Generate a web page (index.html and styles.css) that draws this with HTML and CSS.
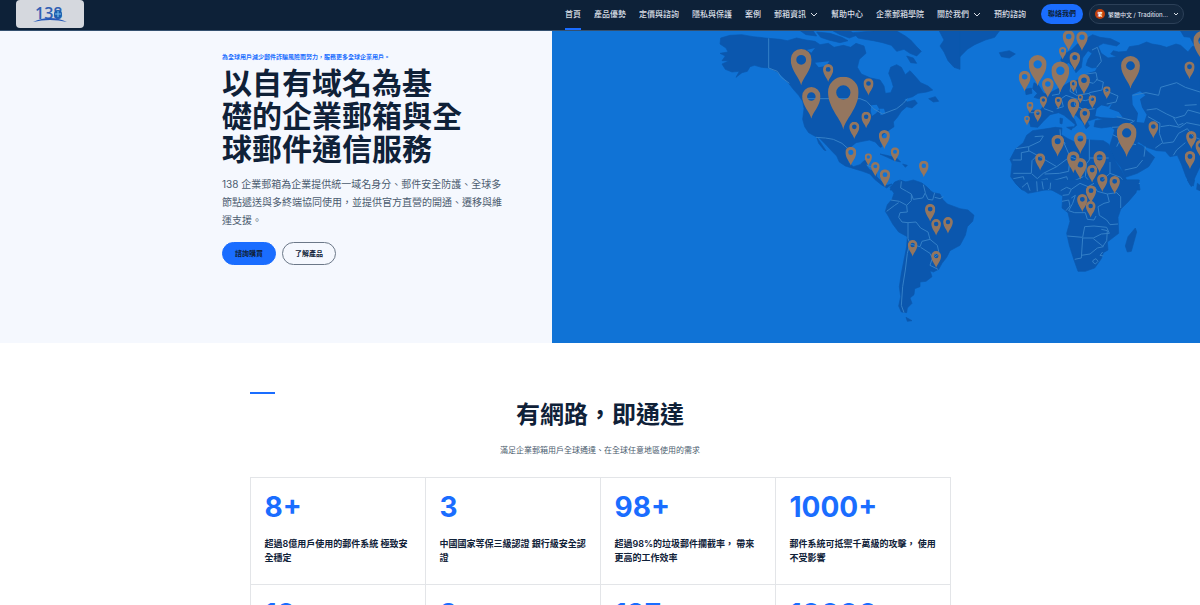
FILE: index.html
```html
<!DOCTYPE html>
<html lang="zh-Hant">
<head>
    <meta charset="UTF-8">
    <meta name="viewport" content="width=device-width, initial-scale=1.0">
    <title>138 企業郵箱</title>
    <link rel="stylesheet" href="styles.css">
</head>
<body>
    <header class="site-header">
        <a href="#" class="logo" aria-label="138">
            <svg viewBox="0 0 36 28" width="36" height="28">
                <text x="3" y="19" class="logo-text">138</text>
                <circle cx="26" cy="14" r="4" fill="#1b5fae"/>
                <path d="M23 14h6M26 11v6" stroke="#7cc0ee" stroke-width="1"/>
                <path d="M1 22Q18 14 35 22Q18 18 1 22Z" fill="#2458b8"/>
            </svg>
        </a>
        <nav class="main-nav">
            <a href="#" class="active">首頁</a>
            <a href="#">產品優勢</a>
            <a href="#">定價與諮詢</a>
            <a href="#">隱私與保護</a>
            <a href="#">案例</a>
            <button type="button">郵箱資訊 <svg class="chevron" viewBox="0 0 8 8"><path d="M1 3l3 3 3-3"/></svg></button>
            <a href="#">幫助中心</a>
            <a href="#">企業郵箱學院</a>
            <button type="button">關於我們 <svg class="chevron" viewBox="0 0 8 8"><path d="M1 3l3 3 3-3"/></svg></button>
            <a href="#">預約諮詢</a>
        </nav>
        <a href="#" class="contact">聯絡我們</a>
        <label class="lang">
            <span class="lang-badge">繁</span>
            <select aria-label="語言">
                <option>繁體中文 / Tradition...</option>
            </select>
            <svg class="chevron" viewBox="0 0 8 8"><path d="M2 3l2 2 2-2"/></svg>
        </label>
    </header>

    <main>
        <section class="hero">
            <div class="hero-text">
                <p class="eyebrow">為全球用戶減少郵件詐騙風險而努力，服務更多全球企業用戶。</p>
                <h1>以自有域名為基<br>礎的企業郵箱與全<br>球郵件通信服務</h1>
                <p class="intro">138 企業郵箱為企業提供統一域名身分、郵件安全防護、全球多節點遞送與多終端協同使用，並提供官方直營的開通、遷移與維運支援。</p>
                <div class="hero-buttons">
                    <a href="#" class="btn btn-primary">諮詢購買</a>
                    <a href="#" class="btn btn-outline">了解產品</a>
                </div>
            </div>
            <svg class="hero-map" viewBox="0 0 1944 936" preserveAspectRatio="xMidYMid slice" aria-hidden="true">
                <symbol id="pin" viewBox="0 0 60 104">
                    <path fill-rule="evenodd" d="M30 104C27 84 0 62 0 30A30 30 0 0 1 60 30C60 62 33 84 30 104ZM30 17A14 14 0 1 0 30 45A14 14 0 1 0 30 17Z"/>
                </symbol>

                <!-- North America -->
                <g transform="translate(444 -3)">
                    <path class="land" d="M62 24L90 16L125 14L160 20L205 25L240 28L262 32L290 24L318 30L345 34L360 44L385 40L402 52L430 46L452 52L468 40L492 48L498 70L478 88L472 112L484 132L512 144L540 150L552 168L556 190L572 188L580 170L574 150L566 130L572 112L590 104L604 112L616 134L630 122L648 142L662 158L684 168L698 180L680 186L654 190L638 200L612 208L622 216L644 210L652 220L636 234L620 230L604 244L592 262L580 276L582 290L568 300L548 314L540 330L546 350L540 352L526 336L508 330L488 334L468 338L456 348L446 356L438 374L446 398L460 410L480 404L492 392L506 392L500 408L510 420L528 424L530 440L546 456L560 466L576 462L560 474L544 464L524 448L510 432L488 424L462 416L436 408L418 396L410 378L396 364L378 344L358 324L344 318L326 308L314 290L308 268L312 236L308 214L296 196L280 178L266 160L248 140L232 126L210 114L184 112L164 106L150 110L142 124L126 128L108 142L118 124L96 126L76 118L66 102L88 92L66 92L76 78L60 70L84 66L78 54L60 42Z"/>
                    <path class="land" d="M350 322L362 338L378 362L372 360L356 340ZM302 3L340 3L350 18L318 14ZM350 6L390 10L426 22L444 32L420 38L386 30L362 22ZM400 3L452 4L470 16L448 24L420 14ZM460 8L520 3L590 3L616 18L632 30L650 50L664 64L650 78L630 70L612 58L590 64L574 46L548 38L520 32L494 28L474 24ZM620 78L640 84L650 100L632 98ZM686 206L706 200L716 214L700 216ZM718 3L780 3L780 118L762 112L744 92L732 66L720 48L732 30Z"/>
                    <path class="water" d="M345 98L388 94L378 108L356 112ZM320 60L345 54L334 68ZM514 226L530 224L538 238L528 250L516 258L512 242ZM538 236L552 236L556 250L542 256Z"/>
                    <path class="land" d="M540 372L560 376L590 384L602 396L584 392L562 382ZM608 402L622 406L616 412ZM570 480L584 456L600 450L616 456L640 450L664 458L680 470L690 480Z"/>
                    <path class="border" d="M206 25V114L232 124L244 142L268 160M308 206H480L500 214L520 236L548 252L590 236L610 220L622 206M348 322L376 324L400 328L426 340L444 356M500 405L520 414L526 430M600 452L606 470"/>
                </g>

                <!-- Europe, Asia and northern Africa -->
                <g transform="translate(1224 -3)">
                    <path class="land" d="M0 3H118L104 22L76 30L44 44L22 58L0 80ZM118 68L148 62L166 72L148 84L124 80Z"/>
                    <path class="land" d="M720 42L696 50L684 66L662 46L648 42L620 52L600 46L576 42L560 36L536 46L508 50L500 64L476 66L460 62L452 72L470 80L444 84L424 70L414 48L430 40L470 48L480 40L452 26L420 22L398 14L378 26L352 42L334 60L310 74L302 90L312 104L326 98L338 110L348 128L364 112L368 84L384 62L396 70L384 88L378 106L396 114L412 112L406 124L384 130L374 142L354 150L330 156L310 168L290 178L274 186L252 192L232 196L246 208L252 224L242 240L208 242L206 268L212 290L234 292L250 274L270 254L296 248L312 256L334 274L346 284L340 294L350 286L344 270L330 252L348 256L368 276L378 296L388 288L382 274L400 268L412 264L430 268L406 272L402 290L424 294L454 290L464 300L458 320L448 350L462 386L482 412L496 442L532 430L566 410L584 382L560 362L548 348L530 340L536 336L560 352L590 362L616 364L630 380L652 376L664 402L678 440L694 470L706 440L720 410Z"/>
                    <path class="land" d="M222 158L236 166L248 186L262 200L236 206L222 202L232 190L218 176ZM196 178L214 174L216 190L198 194ZM300 264L308 266L306 282L300 280ZM320 292L340 290L334 300Z"/>
                    <path class="land" d="M218 302L248 298L286 292L306 294L304 314L324 326L344 336L358 326L392 330L430 332L446 342L452 362L468 396L486 424L500 450L536 450L540 480H186L168 462L152 440L156 402L150 388L166 358L190 338L200 316Z"/>
                    <path class="water" d="M410 236L424 226L444 230L456 220L448 236L476 246L488 262L460 264L424 262L406 258ZM516 194L540 184L556 196L540 208L546 232L560 254L552 278L530 276L534 250L518 224ZM656 6L672 3L686 20L668 34Z"/>
                    <path class="land" d="M662 3H720V30L702 44L690 22L672 20Z"/>
                    <path class="border" d="M396 60L412 52L420 76L424 94L410 112M380 132L408 128L412 148L400 160L384 156M408 148L430 156L426 180L388 188M432 180L474 198L468 216L440 222M334 160L330 184L350 196L388 190L396 206L376 212L346 206L318 196L304 206L310 230L290 236M252 236L280 246M212 248L236 248M346 206L344 226L374 240L404 236M300 178L298 192L276 196M342 150L350 190M456 292L494 290L524 272M470 260L520 272M518 196L558 188L596 196L602 172L650 158L676 172L720 186M560 240L590 236L620 252L646 264L674 256L684 240L720 250M674 226L710 224M564 260L600 280L598 310L608 338L586 354M602 290L628 286L660 292L680 278L720 286M640 262L654 286L670 280M608 340L640 336L656 310L682 296L700 320L720 328M640 376L650 360L676 338M458 314L478 324L500 338L528 344M470 350L480 330M494 420L530 412L548 390M556 350L552 380M300 298L302 330L316 340M224 320L250 318L240 334L206 350L168 356M206 350V364L184 368V390H158M206 362L232 376L216 392L214 430L160 430M232 376L290 410L250 430L232 446L216 432M290 410L330 380L308 330M388 328V390M388 384L446 384M388 390L380 400L330 380M330 380L326 424L298 430L254 432M380 400L376 440L394 460L420 456L450 430L450 396M160 446L190 440L196 462L216 458L220 480M216 458L262 446L266 480M266 456L320 440L326 460L306 480M326 460L370 440M450 430L482 442L500 466L540 460"/>
                </g>

                <!-- South America -->
                <g transform="translate(444 447)">
                    <path class="land" d="M570 22L584 8L604 2L624 8L644 6L668 12L686 28L700 38L720 42L728 58L742 72L780 86L804 90L822 106L818 124L802 140L796 166L780 196L750 212L740 232L726 250L716 268L700 276L690 272L696 290L678 304L660 306L660 320L644 326L642 344L630 354L636 370L622 384L620 398L604 396L596 378L602 350L598 320L604 280L612 240L620 200L622 170L596 156L578 132L566 110L556 94L562 74L576 58L582 40ZM618 412L636 422L622 424Z"/>
                    <path class="border" d="M604 4L602 24L620 34L634 42L634 62L620 76L598 64L572 60M560 94L584 76L596 68M620 76L622 96L600 98L596 112L606 126L624 128V176L630 190L622 220L616 270L608 320L604 376L612 398M634 42L640 58L668 54L676 38L670 14M676 40L684 58L698 60L704 38M704 52L720 56L730 50M624 128L648 126L662 144L684 156L690 178L666 184L660 200L630 192M662 202L690 220L696 232L716 214L712 196L690 178M716 222L696 238L690 256L714 268"/>
                </g>

                <!-- Southern Africa -->
                <g transform="translate(1224 447)">
                    <path class="land" d="M160 0L178 22L204 40L236 34L268 26L290 38L308 48L306 84L324 98L330 124L320 160L328 196L342 240L354 274L376 274L404 264L424 236L430 218L444 210L442 186L476 160L474 112L482 88L504 66L528 38L538 0ZM526 144L530 156L514 214L502 216L496 198L504 170ZM682 0H704L700 18L690 14ZM712 10L720 16V32L710 28Z"/>
                    <path class="border" d="M186 22L202 8L210 32M232 34L230 4M250 28L246 4M270 28L272 8M302 32L320 22L334 28L326 44L308 46M334 28L360 10L384 20L402 10M306 64L326 60L330 78L318 92M334 54L346 46L338 70L326 92L344 98H376L382 118L402 120L408 108M404 20L412 34L442 42L470 38L482 50M442 42L448 66L432 70L414 80L418 106L440 120L450 134L474 132M482 50V84M322 168L368 172L374 140L402 138L440 142L448 160L424 162L400 174L368 174L364 234L344 238M400 176L430 200L412 204L390 222L364 226M424 148L442 152L440 182L428 200M428 216L420 226L430 228M400 240L408 236L414 244L406 252L398 246Z"/>
                </g>

                <g class="pins">
                    <g transform="translate(444 -3)">
                        <use href="#pin" x="272" y="57" width="63" height="109"/>
                        <use href="#pin" x="369" y="102" width="31" height="54"/>
                        <use href="#pin" x="384" y="140" width="92" height="159"/>
                        <use href="#pin" x="306" y="171" width="56" height="95"/>
                        <use href="#pin" x="490" y="145" width="31" height="52"/>
                        <use href="#pin" x="484" y="245" width="29" height="50"/>
                        <use href="#pin" x="447" y="275" width="32" height="52"/>
                        <use href="#pin" x="536" y="300" width="34" height="57"/>
                        <use href="#pin" x="436" y="350" width="33" height="57"/>
                        <use href="#pin" x="571" y="352" width="28" height="44"/>
                        <use href="#pin" x="494" y="370" width="22" height="37"/>
                        <use href="#pin" x="512" y="396" width="28" height="44"/>
                        <use href="#pin" x="539" y="418" width="32" height="54"/>
                        <use href="#pin" x="657" y="392" width="29" height="50"/>
                    </g>
                    <g transform="translate(1224 -3)">
                        <use href="#pin" x="307" y="1" width="38" height="62"/>
                        <use href="#pin" x="348" y="4" width="36" height="59"/>
                        <use href="#pin" x="297" y="51" width="22" height="38"/>
                        <use href="#pin" x="328" y="66" width="33" height="56"/>
                        <use href="#pin" x="206" y="75" width="54" height="94"/>
                        <use href="#pin" x="274" y="94" width="54" height="94"/>
                        <use href="#pin" x="176" y="122" width="36" height="62"/>
                        <use href="#pin" x="245" y="144" width="37" height="60"/>
                        <use href="#pin" x="354" y="132" width="36" height="62"/>
                        <use href="#pin" x="329" y="150" width="23" height="38"/>
                        <use href="#pin" x="429" y="169" width="23" height="39"/>
                        <use href="#pin" x="239" y="198" width="22" height="39"/>
                        <use href="#pin" x="284" y="200" width="22" height="37"/>
                        <use href="#pin" x="353" y="193" width="16" height="28"/>
                        <use href="#pin" x="385" y="196" width="24" height="40"/>
                        <use href="#pin" x="322" y="205" width="36" height="61"/>
                        <use href="#pin" x="199" y="215" width="22" height="36"/>
                        <use href="#pin" x="222" y="238" width="23" height="39"/>
                        <use href="#pin" x="192" y="257" width="18" height="30"/>
                        <use href="#pin" x="358" y="234" width="33" height="54"/>
                        <use href="#pin" x="483" y="78" width="57" height="98"/>
                        <use href="#pin" x="673" y="94" width="31" height="54"/>
                        <use href="#pin" x="700" y="3" width="56" height="97"/>
                        <use href="#pin" x="470" y="278" width="60" height="103"/>
                        <use href="#pin" x="565" y="273" width="30" height="54"/>
                        <use href="#pin" x="678" y="303" width="32" height="54"/>
                        <use href="#pin" x="706" y="330" width="32" height="54"/>
                        <use href="#pin" x="674" y="363" width="32" height="55"/>
                        <use href="#pin" x="274" y="314" width="38" height="66"/>
                        <use href="#pin" x="342" y="306" width="38" height="66"/>
                        <use href="#pin" x="225" y="370" width="31" height="52"/>
                        <use href="#pin" x="321" y="364" width="38" height="66"/>
                        <use href="#pin" x="342" y="384" width="38" height="65"/>
                        <use href="#pin" x="400" y="363" width="38" height="66"/>
                        <use href="#pin" x="381" y="404" width="31" height="54"/>
                        <use href="#pin" x="411" y="432" width="32" height="54"/>
                        <use href="#pin" x="448" y="438" width="32" height="54"/>
                        <use href="#pin" x="377" y="466" width="32" height="54"/>
                        <use href="#pin" x="351" y="492" width="32" height="54"/>
                        <use href="#pin" x="376" y="513" width="32" height="50"/>
                    </g>
                    <g transform="translate(444 447)">
                        <use href="#pin" x="675" y="71" width="31" height="54"/>
                        <use href="#pin" x="693" y="117" width="31" height="50"/>
                        <use href="#pin" x="729" y="111" width="30" height="50"/>
                        <use href="#pin" x="623" y="180" width="30" height="50"/>
                        <use href="#pin" x="693" y="213" width="31" height="51"/>
                    </g>
                </g>
            </svg>
        </section>

        <section class="stats">
            <h2>有網路，即通達</h2>
            <p class="stats-sub">滿足企業郵箱用戶全球通達、在全球任意地區使用的需求</p>
            <div class="stats-grid">
                <div class="stat"><strong>8+</strong><p>超過8億用戶使用的郵件系統 極致安全穩定</p></div>
                <div class="stat"><strong>3</strong><p>中國國家等保三級認證 銀行級安全認證</p></div>
                <div class="stat"><strong>98+</strong><p>超過98%的垃圾郵件攔截率， 帶來更高的工作效率</p></div>
                <div class="stat"><strong>1000+</strong><p>郵件系統可抵禦千萬級的攻擊， 使用不受影響</p></div>
                <div class="stat"><strong>10</strong></div>
                <div class="stat"><strong>9</strong></div>
                <div class="stat"><strong>137</strong></div>
                <div class="stat"><strong>10000</strong></div>
            </div>
        </section>
    </main>
</body>
</html>
```
FILE: styles.css
```css
* {
    box-sizing: border-box;
}

body {
    margin: 0;
    font-family: Inter, "Noto Sans CJK TC", sans-serif;
    color: #0f2138;
    background-color: white;
}

a {
    color: inherit;
    text-decoration: none;
}

h1, h2, p {
    margin: 0;
}

.site-header {
    display: flex;
    align-items: center;
    height: 31px;
    padding: 0 16px 2px;
    background-color: #0d2138;
    border-bottom: 1px solid #34506f;
    color: #d9dfe6;
}

.logo {
    display: flex;
    justify-content: center;
    align-self: flex-start;
    width: 68px;
    height: 28px;
    background-color: #d5d8de;
    border-radius: 4px;
}

.logo-text {
    font-family: "Open Sans", sans-serif;
    font-size: 16px;
    font-weight: 600;
    fill: #3160b4;
}

.main-nav {
    display: flex;
    align-self: stretch;
    gap: 13px;
    margin-left: auto;
    margin-right: 15px;
    margin-bottom: -2px;
}

.main-nav a,
.main-nav button {
    display: flex;
    align-items: center;
    gap: 4px;
    padding: 0 0 3px;
    border: none;
    background: none;
    color: inherit;
    font: inherit;
    font-size: 8px;
    font-weight: 500;
    white-space: nowrap;
    cursor: pointer;
}

.main-nav .active {
    box-shadow: inset 0 -2px #1a6dff;
}

.chevron {
    width: 8px;
    height: 8px;
    flex-shrink: 0;
    fill: none;
    stroke: currentColor;
    stroke-width: 1;
}

.contact {
    padding: 0 7px;
    margin-right: 6px;
    border-radius: 10px;
    background-color: #1a6dff;
    color: #0d2138;
    font-size: 7px;
    font-weight: 700;
    line-height: 20px;
    white-space: nowrap;
}

.lang {
    display: flex;
    align-items: center;
    width: 95px;
    height: 20px;
    padding: 0 3px 0 5px;
    border: 1px solid #2c4058;
    border-radius: 10px;
    background-color: #14283f;
}

.lang-badge {
    width: 10px;
    border-radius: 50%;
    background-color: #c2410c;
    color: white;
    font-size: 5px;
    font-weight: 700;
    line-height: 10px;
    text-align: center;
}

.lang select {
    flex: 1;
    min-width: 0;
    margin-left: 3px;
    padding: 0;
    appearance: none;
    border: none;
    background: none;
    color: inherit;
    font: inherit;
    font-size: 6px;
    font-weight: 500;
}

.hero {
    display: grid;
    grid-template-columns: 46fr 54fr;
    min-height: 312px;
    background-color: #f5f8fe;
}

.hero-text {
    padding: 21px 24px 78px 40.2%;
}

.eyebrow {
    color: #1a6dff;
    font-size: 6px;
    font-weight: 700;
    line-height: 10px;
    white-space: nowrap;
}

.hero h1 {
    margin-top: 5px;
    font-size: 30px;
    font-weight: 600;
    line-height: 33px;
    white-space: nowrap;
}

.intro {
    max-width: 286px;
    margin-top: 9px;
    color: #4b5b6e;
    font-size: 10px;
    line-height: 18px;
}

.hero-buttons {
    display: flex;
    gap: 6px;
    margin-top: 13px;
}

.btn {
    padding: 0 12px;
    border: 1px solid #1a6dff;
    border-radius: 12px;
    font-size: 7px;
    font-weight: 700;
    line-height: 21px;
}

.btn-primary {
    background-color: #1a6dff;
}

.btn-outline {
    border-color: #6c7888;
}

.hero-map {
    display: block;
    width: 100%;
    height: 100%;
    background-color: #1073d6;
}

.land {
    fill: #0b57ae;
    stroke: #0b57ae;
    stroke-width: 2;
    stroke-linejoin: round;
}

.water {
    fill: #1073d6;
}

.border {
    fill: none;
    stroke: #3480c8;
    stroke-width: 3;
    stroke-linejoin: round;
}

.pins {
    fill: #94765f;
}

.stats {
    max-width: 749px;
    margin: 0 auto;
    padding: 49px 24px 40px;
    text-align: center;
}

.stats::before {
    content: "";
    display: block;
    width: 25px;
    height: 2px;
    background-color: #1a6dff;
}

.stats h2 {
    margin-top: 5px;
    font-size: 24px;
    font-weight: 600;
    line-height: 32px;
}

.stats-sub {
    margin-top: 12px;
    color: #4b5b6e;
    font-size: 8px;
    line-height: 14px;
}

.stats-grid {
    display: grid;
    grid-template-columns: repeat(4, 1fr);
    margin-top: 20px;
    border-top: 1px solid #e3e5e8;
    border-left: 1px solid #e3e5e8;
    text-align: left;
}

.stat {
    min-height: 107px;
    padding: 14px 12px 14px 14px;
    border-right: 1px solid #e3e5e8;
    border-bottom: 1px solid #e3e5e8;
}

.stat strong {
    display: block;
    color: #1a6dff;
    font-size: 28px;
    font-weight: 700;
    line-height: 30px;
}

.stat p {
    margin-top: 15px;
    font-size: 9px;
    font-weight: 600;
    line-height: 14px;
}
```
